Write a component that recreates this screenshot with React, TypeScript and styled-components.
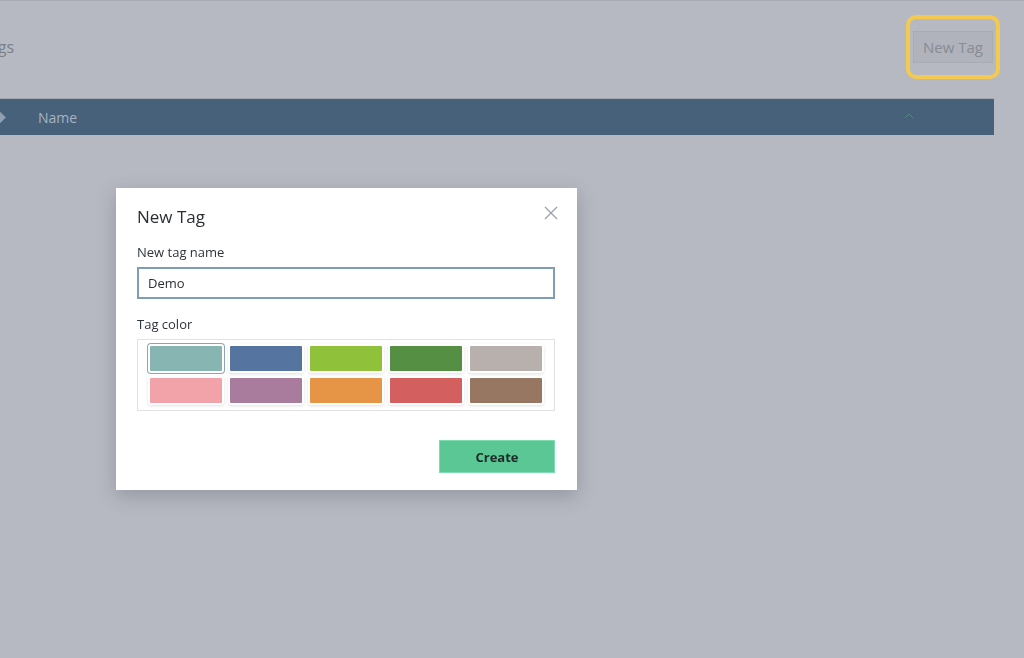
import { FC } from 'react';
import styled, { createGlobalStyle } from 'styled-components';

const GlobalStyle = createGlobalStyle`
	html, body {
		margin: 0;
		padding: 0;
		background: #b6b9c1;
		font-family: 'Open Sans', 'Liberation Sans', sans-serif;
		overflow: hidden;
	}
`;

const TAG_COLORS = [
	'#86b5b2',
	'#5674a0',
	'#90c13b',
	'#558f44',
	'#b8b0ad',
	'#f2a3a9',
	'#a97b9d',
	'#e69445',
	'#d45f5f',
	'#977761',
];

const App: FC = () => {
	const selected = 0;

	return (
		<>
			<GlobalStyle />
			<Page>
				<Header>
					<PageTitle>Tags</PageTitle>
					<Highlight>
						<GhostButton>New Tag</GhostButton>
					</Highlight>
				</Header>
				<TableHead>
					<SortMark />
					<HeadLabel>Name</HeadLabel>
					<Chevron viewBox="0 0 10 6">
						<path d="M1 5 L5 1 L9 5" fill="none" stroke="#4f8f7a" strokeWidth="1" />
					</Chevron>
				</TableHead>
			</Page>

			<Overlay>
				<Modal>
					<ModalHeader>
						<ModalTitle>New Tag</ModalTitle>
						<CloseButton aria-label="close">
							<svg width="14" height="14" viewBox="0 0 14 14">
								<path d="M1 1 L13 13 M13 1 L1 13" stroke="#9aa1ab" strokeWidth="1.3" />
							</svg>
						</CloseButton>
					</ModalHeader>

					<FieldLabel>New tag name</FieldLabel>
					<TextInput defaultValue="Demo" />

					<FieldLabel $spaced>Tag color</FieldLabel>
					<Palette>
						{TAG_COLORS.map((c, i) => (
							<Swatch key={c} $active={i === selected}>
								<SwatchFill $color={c} />
							</Swatch>
						))}
					</Palette>

					<Footer>
						<PrimaryButton>Create</PrimaryButton>
					</Footer>
				</Modal>
			</Overlay>
		</>
	);
};

const Page = styled.div`
	width: 1024px;
	height: 658px;
	border-top: 1px solid #a9acb4;
	box-sizing: border-box;
`;

const Header = styled.header`
	display: flex;
	align-items: center;
	justify-content: space-between;
	height: 97px;
	padding-right: 24px;
`;

const PageTitle = styled.h1`
	margin: -6px 0 0 -20px;
	font-size: 16px;
	font-weight: 400;
	color: #7b8089;
`;

const Highlight = styled.div`
	padding: 12px 3px;
	border: 4px solid #f3c94f;
	border-radius: 10px;
	margin-top: -6px;
`;

const GhostButton = styled.button`
	display: block;
	width: 80px;
	height: 32px;
	font-family: inherit;
	font-size: 15px;
	color: #868b94;
	background: #b0b3bb;
	border: 1px solid #a8abb3;
	padding: 0;
`;

const TableHead = styled.div`
	position: relative;
	display: flex;
	align-items: center;
	height: 36px;
	width: 994px;
	background: #47617a;
	border-top: 1px solid #a2a8b2;
`;

const SortMark = styled.span`
	width: 9px;
	height: 9px;
	margin-left: -5px;
	background: #8ea0b2;
	transform: rotate(45deg);
`;

const HeadLabel = styled.span`
	margin-left: 34px;
	font-size: 14px;
	color: #a7b3c0;
	flex: 1;
`;

const Chevron = styled.svg`
	width: 10px;
	height: 6px;
	margin-right: 80px;
	margin-top: -3px;
`;

const Overlay = styled.div`
	position: fixed;
	inset: 0;
	display: flex;
	align-items: flex-start;
	padding: 188px 0 0 116px;
`;

const Modal = styled.div`
	width: 461px;
	height: 302px;
	box-sizing: border-box;
	background: #ffffff;
	padding: 16px 22px 18px 21px;
	box-shadow: 0 6px 18px rgba(60, 64, 80, 0.28);
	display: flex;
	flex-direction: column;
`;

const ModalHeader = styled.div`
	display: flex;
	align-items: center;
	justify-content: space-between;
	height: 26px;
	margin-bottom: 12px;
`;

const ModalTitle = styled.h2`
	margin: -2px 0 0;
	font-size: 17px;
	font-weight: 400;
	color: #2a2f36;
`;

const CloseButton = styled.button`
	background: none;
	border: 0;
	padding: 0;
	margin-right: -3px;
	margin-top: -8px;
	display: flex;
	cursor: pointer;
`;

const FieldLabel = styled.label<{ $spaced?: boolean }>`
	display: block;
	font-size: 13px;
	line-height: 18px;
	color: #2f343b;
	margin: ${(p) => (p.$spaced ? '16px' : '1px')} 0 6px;
`;

const TextInput = styled.input`
	box-sizing: border-box;
	width: 418px;
	height: 32px;
	border: 2px solid #7f9eb3;
	padding: 0 9px;
	font-family: inherit;
	font-size: 13px;
	color: #2b3037;
	outline: none;
`;

const Palette = styled.div`
	box-sizing: border-box;
	width: 418px;
	display: grid;
	grid-template-columns: repeat(5, 76px);
	column-gap: 4px;
	row-gap: 3px;
	padding: 4px 0 5px 10px;
	border: 1px solid #e1e2e7;
`;

const Swatch = styled.div<{ $active: boolean }>`
	padding: 2px;
	border-radius: 3px;
	box-shadow: ${(p) =>
		p.$active ? '0 0 0 1px #8ea4b6' : '0 1px 3px rgba(0, 0, 0, 0.12)'};
	background: #ffffff;
`;

const SwatchFill = styled.div<{ $color: string }>`
	height: 25px;
	background: ${(p) => p.$color};
	border-radius: 1px;
`;

const Footer = styled.div`
	margin-top: auto;
	display: flex;
	justify-content: flex-end;
`;

const PrimaryButton = styled.button`
	width: 116px;
	height: 33px;
	margin-bottom: -1px;
	background: #5bc795;
	border: 1px solid #7fdcb0;
	font-family: inherit;
	font-size: 13px;
	font-weight: 700;
	color: #1d2a26;
	cursor: pointer;
`;

export default App;
